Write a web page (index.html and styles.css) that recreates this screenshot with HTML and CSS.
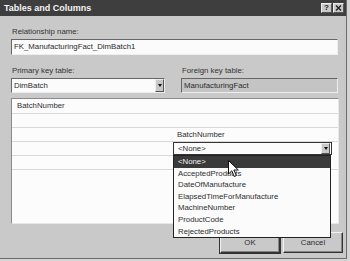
FILE: index.html
```html
<!DOCTYPE html>
<html>
<head>
<meta charset="utf-8">
<link rel="stylesheet" href="styles.css">
</head>
<body>
<div class="dialog">
  <div class="titlebar">
    <span class="title">Tables and Columns</span>
    <div class="tbtns">
      <span class="tbtn">?</span>
      <span class="tbtn"><svg width="7" height="6" viewBox="0 0 7 6"><path d="M1 0.5 L6 5.5 M6 0.5 L1 5.5" stroke="#222" stroke-width="1.4"/></svg></span>
    </div>
  </div>
  <div class="body">
    <div class="label">Relationship name:</div>
    <div class="field">FK_ManufacturingFact_DimBatch1</div>
    <div class="tables">
      <div class="tcol left">
        <div class="label">Primary key table:</div>
        <div class="combo"><span class="ctext">DimBatch</span><span class="dbtn"><span class="tri"></span></span></div>
      </div>
      <div class="tcol right">
        <div class="label">Foreign key table:</div>
        <div class="field ro">ManufacturingFact</div>
      </div>
    </div>
    <div class="grid">
      <div class="cell c1">BatchNumber</div><div class="cell c2"></div>
      <div class="cell c1"></div><div class="cell c2"></div>
      <div class="cell c1"></div><div class="cell c2">BatchNumber</div>
      <div class="cell c1"></div>
      <div class="cell c2 editing">
        <div class="gcombo"><span class="ctext">&lt;None&gt;</span><span class="dbtn small"><span class="tri"></span></span></div>
        <ul class="dlist">
          <li class="sel">&lt;None&gt;</li>
          <li>AcceptedProducts</li>
          <li>DateOfManufacture</li>
          <li>ElapsedTimeForManufacture</li>
          <li>MachineNumber</li>
          <li>ProductCode</li>
          <li>RejectedProducts</li>
        </ul>
      </div>
      <div class="cell c1"></div><div class="cell c2"></div>
    </div>
    <div class="buttons">
      <div class="btn def">OK</div>
      <div class="btn">Cancel</div>
    </div>
  </div>
  <svg class="cursor" width="12" height="18" viewBox="0 0 12 18"><path d="M0.5 0.5 L0.5 14 L3.8 10.8 L6.2 16.5 L8.3 15.6 L5.9 10 L10.3 10 Z" fill="#fff" stroke="#111" stroke-width="1"/></svg>
</div>
</body>
</html>
```
FILE: styles.css
```css
* { box-sizing: border-box; }
html, body { margin: 0; padding: 0; }
body {
  width: 350px;
  height: 261px;
  overflow: hidden;
  background: #d4d4d4;
  font-family: "Liberation Sans", Arial, sans-serif;
  font-size: 7.8px;
  color: #2b2b2b;
}
.dialog {
  position: relative;
  width: 347px;
  height: 259px;
  background: #c9c9c9;
  border-right: 1px solid #6a6a6a;
  border-bottom: 1px solid #6a6a6a;
  display: flex;
  flex-direction: column;
}
.titlebar {
  height: 16px;
  background: #3e3e3e;
  display: flex;
  align-items: center;
  padding: 0 2px 0 4px;
}
.title {
  flex: 1;
  color: #f4f4f4;
  font-weight: bold;
  font-size: 9px;
}
.tbtns { display: flex; gap: 1px; }
.tbtn {
  width: 11px;
  height: 10px;
  background: #c9c9c9;
  border: 1px solid;
  border-color: #eee #555 #555 #eee;
  display: flex;
  align-items: center;
  justify-content: center;
  font-weight: bold;
  font-size: 8px;
  line-height: 8px;
  color: #222;
}
.body {
  flex: 1;
  display: flex;
  flex-direction: column;
  padding: 11px 8px 0 11px;
}
.label {
  height: 10px;
  line-height: 10px;
  margin-left: 1px;
  margin-bottom: 2px;
  color: #333;
}
.field {
  height: 16px;
  line-height: 14px;
  padding-left: 2px;
  background: #fbfbfb;
  border: 1px solid;
  border-color: #666 #eee #eee #666;
  color: #2a2a2a;
}
.field.ro { background: #c4c4c4; height: 15px; line-height: 13px; }
.tables {
  display: flex;
  justify-content: space-between;
  margin-top: 11px;
}
.tcol.left { width: 154px; }
.tcol.right { width: 157px; }
.combo {
  height: 15px;
  background: #fbfbfb;
  border: 1px solid;
  border-color: #666 #eee #eee #666;
  display: flex;
  align-items: center;
  padding-left: 2px;
}
.ctext { flex: 1; }
.dbtn {
  width: 9px;
  height: 13px;
  background: #c9c9c9;
  border: 1px solid;
  border-color: #eee #555 #555 #eee;
  display: flex;
  align-items: center;
  justify-content: center;
}
.dbtn.small { height: 11px; }
.tri {
  width: 0; height: 0;
  border-left: 2.5px solid transparent;
  border-right: 2.5px solid transparent;
  border-top: 3px solid #111;
}
.grid {
  margin-top: 5px;
  width: 328px;
  height: 126px;
  background: #fcfcfc;
  border: 1px solid;
  border-color: #8a8a8a #e8e8e8 #e8e8e8 #8a8a8a;
  display: grid;
  grid-template-columns: 161px 1fr;
  grid-template-rows: 15px;
  grid-auto-rows: 14px;
  align-content: start;
}
.cell {
  border-bottom: 1px solid #d9d9d9;
  line-height: 13px;
  padding-left: 5px;
  color: #2e2e2e;
}
.cell.c2 { padding-left: 4px; }
.cell.editing { position: relative; padding: 0; border-bottom: none; }
.gcombo {
  width: 159px;
  height: 13px;
  background: #fbfbfb;
  border: 1px solid #333;
  display: flex;
  align-items: center;
  padding-left: 4px;
  padding-right: 1px;
}
.dlist {
  position: absolute;
  left: 0;
  top: 13px;
  width: 158px;
  margin: 0;
  padding: 0;
  list-style: none;
  background: #fbfbfb;
  border: 1px solid #222;
  z-index: 5;
}
.dlist li {
  height: 11.6px;
  line-height: 11.6px;
  padding-left: 4px;
  color: #2e2e2e;
}
.dlist li.sel { background: #3a3a3a; color: #f4f4f4; }
.buttons {
  margin-top: 8px;
  margin-right: -5px;
  display: flex;
  justify-content: flex-end;
  gap: 3px;
}
.btn {
  width: 60px;
  height: 21px;
  background: #c9c9c9;
  border: 1px solid;
  border-color: #f2f2f2 #333 #333 #f2f2f2;
  box-shadow: inset -1px -1px 0 #858585;
  display: flex;
  align-items: center;
  justify-content: center;
  color: #2e2e2e;
}
.btn.def { outline: 1px solid #333; }
.cursor {
  position: absolute;
  left: 228px;
  top: 160px;
  z-index: 10;
}
```
